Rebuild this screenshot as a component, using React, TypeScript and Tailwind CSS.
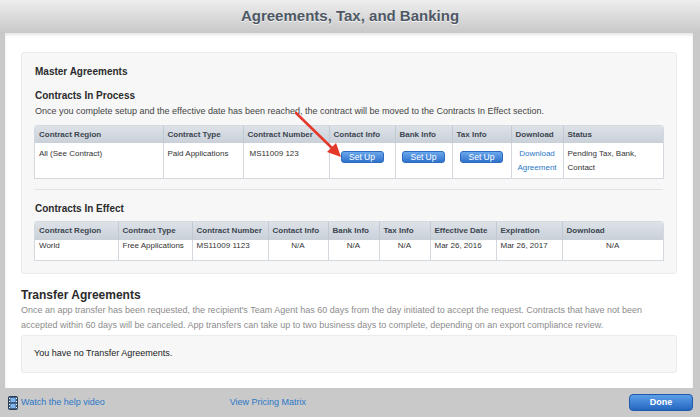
const font = { fontFamily: '"Liberation Sans", Arial, sans-serif' };

function SetUp() {
  return (
    <button className="h-[12px] w-[43px] rounded-[3px] border border-[#2f6bbd] bg-gradient-to-b from-[#6aa8ec] to-[#2f72cc] text-[8.5px] leading-[10px] text-white">
      Set Up
    </button>
  );
}

function HelpIcon() {
  return (
    <svg width="10" height="14" viewBox="0 0 10 14">
      <rect x="0.5" y="0.5" width="9" height="13" rx="1" fill="#3f5f86" stroke="#2c3e55" />
      <rect x="2.5" y="2" width="5" height="4" fill="#7fb4ea" />
      <rect x="2.5" y="8" width="5" height="4" fill="#7fb4ea" />
      <rect x="1" y="2" width="1" height="1" fill="#fff" />
      <rect x="1" y="5" width="1" height="1" fill="#fff" />
      <rect x="1" y="8" width="1" height="1" fill="#fff" />
      <rect x="1" y="11" width="1" height="1" fill="#fff" />
      <rect x="8" y="2" width="1" height="1" fill="#fff" />
      <rect x="8" y="5" width="1" height="1" fill="#fff" />
      <rect x="8" y="8" width="1" height="1" fill="#fff" />
      <rect x="8" y="11" width="1" height="1" fill="#fff" />
    </svg>
  );
}

const th = 'border-l border-[#c3c9d0] first:border-l-0 px-[4px] text-left font-bold text-[#3c4550]';
const td = 'border-l border-[#d3d8de] first:border-l-0 px-[4px] align-top';

export default function App() {
  return (
    <div style={font} className="relative flex h-[417px] w-[700px] flex-col overflow-hidden bg-[#c9c9c9]">
      {/* title bar */}
      <div className="flex h-[33px] items-center justify-center bg-gradient-to-b from-[#eeeeee] to-[#c8c8c8]">
        <h1 className="text-[15px] font-bold text-[#4e5865] [text-shadow:0_1px_0_#f4f4f4]">
          Agreements, Tax, and Banking
        </h1>
      </div>

      {/* white panel */}
      <div className="mx-[5px] mr-[7px] h-[355px] bg-white px-[16px] pt-[19px] shadow-[inset_0_2px_3px_rgba(0,0,0,0.10)]">
        <div className="rounded-[3px] border border-[#ebebeb] bg-[#f7f7f7] px-[13px] pb-[13px] pt-[13px]">
          <div className="text-[10px] font-bold leading-[12px] text-[#2b2b2b]">Master Agreements</div>

          <div className="mt-[12px] text-[10px] font-bold leading-[12px] text-[#2b2b2b]">Contracts In Process</div>
          <p className="mt-[3px] text-[9px] leading-[12px] text-[#444]">
            Once you complete setup and the effective date has been reached, the contract will be moved to the Contracts In Effect section.
          </p>

          <table className="mt-[9px] w-[628px] table-fixed border-collapse overflow-hidden rounded-t-[3px] text-[8px] text-[#333] shadow-[0_0_0_1px_#d4d9df]">
            <colgroup>
              <col className="w-[128px]" />
              <col className="w-[80px]" />
              <col className="w-[86px]" />
              <col className="w-[66px]" />
              <col className="w-[57px]" />
              <col className="w-[59px]" />
              <col className="w-[52px]" />
              <col className="w-[100px]" />
            </colgroup>
            <thead>
              <tr className="h-[17px] bg-gradient-to-b from-[#dde2e8] to-[#c9d0d8]">
                <th className={th}>Contract Region</th>
                <th className={th}>Contract Type</th>
                <th className={th}>Contract Number</th>
                <th className={th}>Contact Info</th>
                <th className={th}>Bank Info</th>
                <th className={th}>Tax Info</th>
                <th className={th}>Download</th>
                <th className={th}>Status</th>
              </tr>
            </thead>
            <tbody>
              <tr className="h-[35px] bg-white leading-[14px]">
                <td className={`${td} pt-[4px]`}>All (See Contract)</td>
                <td className={`${td} pt-[4px]`}>Paid Applications</td>
                <td className={`${td} pl-[6px] pt-[4px]`}>MS11009 123</td>
                <td className={`${td} pt-[8px] text-center`}><SetUp /></td>
                <td className={`${td} pt-[8px] text-center`}><SetUp /></td>
                <td className={`${td} pt-[8px] text-center`}><SetUp /></td>
                <td className={`${td} pt-[4px] text-center text-[#2b78c8]`}>Download<br />Agreement</td>
                <td className={`${td} pt-[4px]`}>Pending Tax, Bank,<br />Contact</td>
              </tr>
            </tbody>
          </table>

          <div className="mt-[11px] h-px bg-[#e2e2e2]" />

          <div className="mt-[13px] text-[10px] font-bold leading-[12px] text-[#2b2b2b]">Contracts In Effect</div>

          <table className="mt-[7px] w-[628px] table-fixed border-collapse overflow-hidden rounded-t-[3px] text-[8px] text-[#333] shadow-[0_0_0_1px_#d4d9df]">
            <colgroup>
              <col className="w-[83px]" />
              <col className="w-[74px]" />
              <col className="w-[76px]" />
              <col className="w-[60px]" />
              <col className="w-[51px]" />
              <col className="w-[51px]" />
              <col className="w-[66px]" />
              <col className="w-[66px]" />
              <col className="w-[101px]" />
            </colgroup>
            <thead>
              <tr className="h-[18px] bg-gradient-to-b from-[#dde2e8] to-[#c9d0d8]">
                <th className={th}>Contract Region</th>
                <th className={th}>Contract Type</th>
                <th className={th}>Contract Number</th>
                <th className={th}>Contact Info</th>
                <th className={th}>Bank Info</th>
                <th className={th}>Tax Info</th>
                <th className={th}>Effective Date</th>
                <th className={th}>Expiration</th>
                <th className={th}>Download</th>
              </tr>
            </thead>
            <tbody>
              <tr className="h-[20px] bg-white">
                <td className={`${td} align-middle`}>World</td>
                <td className={`${td} align-middle`}>Free Applications</td>
                <td className={`${td} align-middle`}>MS11009 1123</td>
                <td className={`${td} align-middle text-center`}>N/A</td>
                <td className={`${td} align-middle text-center`}>N/A</td>
                <td className={`${td} align-middle text-center`}>N/A</td>
                <td className={`${td} align-middle`}>Mar 26, 2016</td>
                <td className={`${td} align-middle`}>Mar 26, 2017</td>
                <td className={`${td} align-middle text-center`}>N/A</td>
              </tr>
            </tbody>
          </table>
        </div>

        <h2 className="mt-[14px] text-[12px] font-bold leading-[14px] text-[#2b2b2b]">Transfer Agreements</h2>
        <p className="mt-[1px] text-[9px] leading-[15px] text-[#8c8c8c]">
          Once an app transfer has been requested, the recipient's Team Agent has 60 days from the day initiated to accept the request. Contracts that have not been accepted within 60 days will be canceled. App transfers can take up to two business days to complete, depending on an export compliance review.
        </p>

        <div className="mt-[2px] flex h-[38px] items-center rounded-[3px] border border-[#ebebeb] bg-[#f7f7f7] px-[12px] text-[9px] text-[#222]">
          You have no Transfer Agreements.
        </div>
      </div>

      {/* footer */}
      <div className="flex flex-1 items-center pl-[8px] pr-[7px] text-[9px]">
        <HelpIcon />
        <a className="ml-[3px] text-[#2b78c8]">Watch the help video</a>
        <a className="ml-[125px] text-[#2b78c8]">View Pricing Matrix</a>
        <button className="ml-auto h-[17px] w-[64px] rounded-[4px] border border-[#1f5aa8] bg-gradient-to-b from-[#5c9fe8] to-[#2466c0] text-[9px] font-bold text-white">
          Done
        </button>
      </div>

      {/* red arrow annotation */}
      <svg className="pointer-events-none absolute left-0 top-0" width="700" height="417">
        <line x1="296" y1="113" x2="333" y2="149" stroke="#e4382a" strokeWidth="2.5" strokeLinecap="round" />
        <polygon points="341,157 327,152 336,143" fill="#e4382a" />
      </svg>
    </div>
  );
}
